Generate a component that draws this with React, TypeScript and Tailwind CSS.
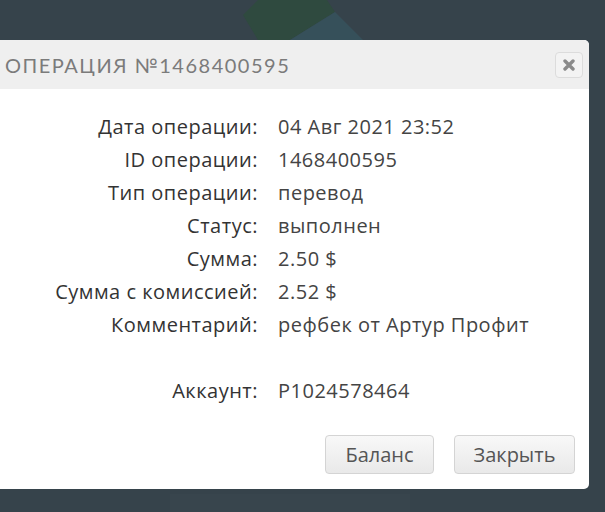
import React from 'react';

const rows: [string, string][] = [
  ['Дата операции:', '04 Авг 2021 23:52'],
  ['ID операции:', '1468400595'],
  ['Тип операции:', 'перевод'],
  ['Статус:', 'выполнен'],
  ['Сумма:', '2.50 $'],
  ['Сумма с комиссией:', '2.52 $'],
  ['Комментарий:', 'рефбек от Артур Профит'],
  ['', ''],
  ['Аккаунт:', 'P1024578464'],
];

const App = () => {
  return (
    <div className="relative w-[605px] h-[512px] overflow-hidden bg-[#36434b] font-['Open_Sans',sans-serif]">
      {/* faint page decoration behind the modal */}
      <svg className="absolute left-[230px] top-0" width="150" height="45" viewBox="0 0 150 45">
        <polygon points="28,0 97,0 105,12 60,40 28,40 13,15" fill="#2f4a3f" />
        <polygon points="105,12 133,40 60,40" fill="#36505a" />
      </svg>
      <div className="absolute left-[170px] top-[494px] w-[240px] h-[18px] bg-[#38454d]" />

      <div className="absolute left-[-12px] top-[40px] w-[601px] h-[449px] rounded-[5px] bg-white overflow-hidden flex flex-col">
        <div className="h-[49px] bg-[#efefef] flex items-center justify-between pl-[17px] pr-[6px]">
          <span className="text-[20px] tracking-[1.5px] text-[#7b7b7b] font-['Lato',sans-serif]">
            ОПЕРАЦИЯ №1468400595
          </span>
          <button className="w-[28px] h-[26px] mt-[1px] rounded-[4px] border border-[#dcdcdc] bg-[#f3f3f3] flex items-center justify-center">
            <svg width="12" height="12" viewBox="0 0 12 12">
              <path d="M2 2 L10 10 M10 2 L2 10" stroke="#8a8a8a" strokeWidth="3.4" strokeLinecap="round" />
            </svg>
          </button>
        </div>

        <div className="grid grid-cols-[270px_1fr] gap-x-[20px] pt-[21px] text-[20px] tracking-[0.5px] text-[#333]">
          {rows.map(([label, value], i) => (
            <React.Fragment key={i}>
              <div className="h-[33px] flex items-center justify-end">{label}</div>
              <div className="h-[33px] flex items-center text-[#444]">{value}</div>
            </React.Fragment>
          ))}
        </div>

        <div className="mt-auto flex justify-end gap-[20px] pr-[14px] pb-[15px]">
          <button className="w-[109px] h-[39px] rounded-[4px] border border-[#d4d4d4] bg-gradient-to-b from-[#f8f8f8] to-[#e9e9e9] text-[20px] text-[#555]">
            Баланс
          </button>
          <button className="w-[121px] h-[39px] rounded-[4px] border border-[#d4d4d4] bg-gradient-to-b from-[#f8f8f8] to-[#e9e9e9] text-[20px] text-[#555]">
            Закрыть
          </button>
        </div>
      </div>
    </div>
  );
};

export default App;
